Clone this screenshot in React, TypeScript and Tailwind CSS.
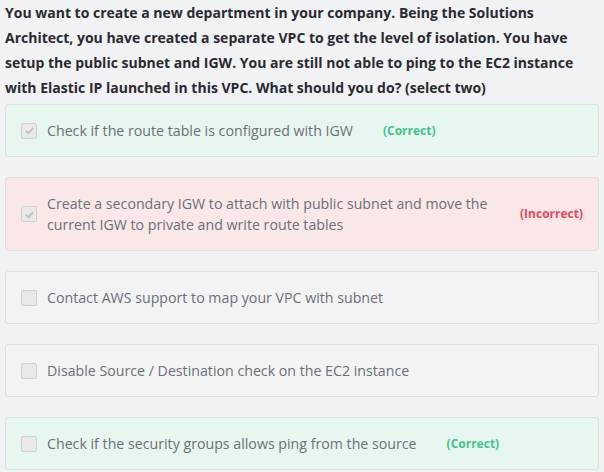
const OPTIONS = [
  { text: 'Check if the route table is configured with IGW', checked: true, result: 'correct' },
  {
    text: 'Create a secondary IGW to attach with public subnet and move the current IGW to private and write route tables',
    checked: true,
    result: 'incorrect',
  },
  { text: 'Contact AWS support to map your VPC with subnet', checked: false, result: '' },
  { text: 'Disable Source / Destination check on the EC2 instance', checked: false, result: '' },
  { text: 'Check if the security groups allows ping from the source', checked: false, result: 'correct' },
]

function Checkbox({ checked }: { checked: boolean }) {
  return (
    <span className="flex h-4 w-4 shrink-0 items-center justify-center rounded-[2px] border border-[#cfcfcf] bg-[#e9e9e9]">
      {checked && (
        <svg viewBox="0 0 12 12" className="h-[11px] w-[11px]">
          <path d="M2 6.2 L4.8 9 L10 3.4" fill="none" stroke="#c4c4c4" strokeWidth="2.2" />
        </svg>
      )}
    </span>
  )
}

export default function App() {
  return (
    <div className="min-h-[472px] w-[604px] bg-[#f1f2f4] px-[5px] font-['Open_Sans',sans-serif]">
      <p className="pr-2 text-[14px] font-bold leading-[25px] text-[#2a2a33]">
        You want to create a new department in your company. Being the Solutions Architect, you have created a
        separate VPC to get the level of isolation. You have setup the public subnet and IGW. You are still not able
        to ping to the EC2 instance with Elastic IP launched in this VPC. What should you do? (select two)
      </p>

      <div className="mt-[4px] flex w-[594px] flex-col gap-5">
        {OPTIONS.map((o) => (
          <div
            key={o.text}
            className={
              'flex items-center rounded-[3px] border border-[#dedfe1] py-[15px] pl-[15px] pr-[15px] ' +
              (o.result === 'correct' ? 'bg-[#e7f6ef]' : o.result === 'incorrect' ? 'bg-[#f9e8e7]' : 'bg-[#f2f3f5]')
            }
          >
            <Checkbox checked={o.checked} />
            <span className="ml-[10px] text-[14.2px] leading-[21px] text-[#6b7079]">{o.text}</span>
            {o.result === 'correct' && (
              <span className="ml-[30px] shrink-0 text-[12px] font-bold text-[#3fc48c]">(Correct)</span>
            )}
            {o.result === 'incorrect' && (
              <span className="ml-[29px] shrink-0 text-[12px] font-bold text-[#f2465a]">(Incorrect)</span>
            )}
          </div>
        ))}
      </div>
    </div>
  )
}
